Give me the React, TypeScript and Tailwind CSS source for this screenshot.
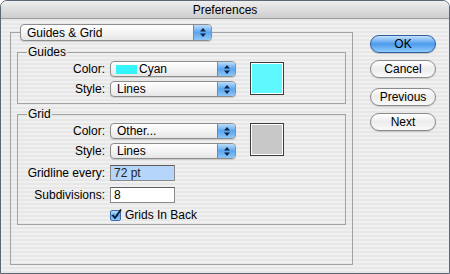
import React from "react";

const Arrows = () => (
  <svg width="8" height="11" viewBox="0 0 8 11">
    <path d="M4 1 L7 4.5 L1 4.5 Z" fill="#0d2547" />
    <path d="M4 10 L7 6.5 L1 6.5 Z" fill="#0d2547" />
  </svg>
);

const Popup = ({
  children,
  size,
}: {
  children: React.ReactNode;
  size: string;
}) => (
  <div
    className={`${size} flex items-stretch rounded-[4px] border border-[#8d8d8d] bg-gradient-to-b from-[#ffffff] via-[#f4f4f4] to-[#e6e6e6] shadow-[0_1px_1px_rgba(0,0,0,0.15)] overflow-hidden`}
  >
    <div className="flex-1 flex items-center pl-[6px] leading-none">{children}</div>
    <div className="w-[18px] flex items-center justify-center bg-gradient-to-b from-[#b9dcfb] via-[#5aa5ee] to-[#8cc6f8] border-l border-[#5b8ccb]">
      <Arrows />
    </div>
  </div>
);

const Swatch = ({ color }: { color: string }) => (
  <div className="w-[34px] h-[33px] border border-[#3c3c3c] bg-white p-[1px]">
    <div className={`w-full h-full ${color}`} />
  </div>
);

const Label = ({ children }: { children: React.ReactNode }) => (
  <div className="w-[88px] text-right pr-[1px] leading-none">{children}</div>
);

const AquaButton = ({
  label,
  primary,
}: {
  label: string;
  primary?: boolean;
}) => (
  <button
    className={
      primary
        ? "w-[66px] h-[18px] rounded-full border border-[#2d5f9e] bg-gradient-to-b from-[#c4e1fb] via-[#4b9bec] to-[#8fcbfb] text-[12px] leading-none text-black shadow-[0_1px_1px_rgba(0,0,0,0.2)]"
        : "w-[66px] h-[18px] rounded-full border border-[#8b8b8b] bg-gradient-to-b from-[#ffffff] via-[#ececec] to-[#fafafa] text-[12px] leading-none text-black shadow-[0_1px_1px_rgba(0,0,0,0.15)]"
    }
  >
    {label}
  </button>
);

export default function App() {
  return (
    <div className="w-[450px] h-[274px] font-['Liberation_Sans',Arial,sans-serif] text-[12px] text-black">
      <div className="h-full flex flex-col rounded-t-[7px] border border-[#5b6775] overflow-hidden bg-[repeating-linear-gradient(180deg,#f0f0f0_0px,#f0f0f0_2px,#e7e7e7_2px,#e7e7e7_4px)]">
        {/* title bar */}
        <div className="h-[18px] shrink-0 flex items-center justify-center border-b border-[#9c9c9c] bg-gradient-to-b from-[#eeeeee] to-[#cdcdcd] text-[12px] leading-none">
          Preferences
        </div>

        <div className="flex">
          {/* main group */}
          <fieldset className="ml-[9px] mt-[5px] w-[342px] h-[241px] border border-[#a2a2a2] px-[6px] pt-[4px]">
            <legend className="ml-[3px]">
              <Popup size="w-[192px] h-[17px]">Guides &amp; Grid</Popup>
            </legend>

            <fieldset className="w-[329px] border border-[#a2a2a2] pt-[2px] pb-[6px]">
              <legend className="ml-[9px] px-[1px] leading-[14px]">Guides</legend>
              <div className="flex items-start">
                <div className="flex flex-col gap-[4px]">
                  <div className="flex items-center gap-[4px]">
                    <Label>Color:</Label>
                    <Popup size="w-[126px] h-[16px]">
                      <span className="w-[21px] h-[9px] bg-[#33f4fb] mr-[2px] ml-[-1px]" />
                      Cyan
                    </Popup>
                  </div>
                  <div className="flex items-center gap-[4px]">
                    <Label>Style:</Label>
                    <Popup size="w-[126px] h-[16px]">Lines</Popup>
                  </div>
                </div>
                <div className="ml-[14px] mt-[1px]">
                  <Swatch color="bg-[#5ef9ff]" />
                </div>
              </div>
            </fieldset>

            <fieldset className="mt-[3px] w-[329px] border border-[#a2a2a2] pt-[2px] pb-[2px]">
              <legend className="ml-[9px] px-[1px] leading-[14px]">Grid</legend>
              <div className="flex items-start">
                <div className="flex flex-col gap-[4px]">
                  <div className="flex items-center gap-[4px]">
                    <Label>Color:</Label>
                    <Popup size="w-[126px] h-[16px]">Other...</Popup>
                  </div>
                  <div className="flex items-center gap-[4px]">
                    <Label>Style:</Label>
                    <Popup size="w-[126px] h-[16px]">Lines</Popup>
                  </div>
                </div>
                <div className="ml-[14px]">
                  <Swatch color="bg-[#c8c8c8]" />
                </div>
              </div>
              <div className="mt-[6px] flex flex-col gap-[6px]">
                <div className="flex items-center gap-[4px]">
                  <Label>Gridline every:</Label>
                  <div className="w-[65px] h-[16px] border border-[#8a8a8a] border-t-[#5f5f5f] bg-[#b6d5fa] pl-[3px] flex items-center leading-none text-[#222]">
                    72 pt
                  </div>
                </div>
                <div className="flex items-center gap-[4px]">
                  <Label>Subdivisions:</Label>
                  <div className="w-[65px] h-[16px] border border-[#8a8a8a] border-t-[#5f5f5f] bg-white pl-[3px] flex items-center leading-none">
                    8
                  </div>
                </div>
                <div className="flex items-center gap-[3px] pl-[92px] h-[14px] mt-[-1px]">
                  <svg width="12" height="12" viewBox="0 0 12 12">
                    <defs>
                      <linearGradient id="cb" x1="0" y1="0" x2="0" y2="1">
                        <stop offset="0" stopColor="#cfe6fc" />
                        <stop offset="0.5" stopColor="#5ba6ee" />
                        <stop offset="1" stopColor="#9cd0fa" />
                      </linearGradient>
                    </defs>
                    <rect x="0.5" y="1.5" width="10" height="10" rx="1.5" fill="url(#cb)" stroke="#3a6ca8" />
                    <path d="M2.5 6 L5 9 L11 0.5" fill="none" stroke="#0b1b33" strokeWidth="1.8" />
                  </svg>
                  <span className="leading-none">Grids In Back</span>
                </div>
              </div>
            </fieldset>
          </fieldset>

          {/* buttons */}
          <div className="ml-[17px] mt-[16px] flex flex-col">
            <AquaButton label="OK" primary />
            <div className="mt-[7px]">
              <AquaButton label="Cancel" />
            </div>
            <div className="mt-[10px]">
              <AquaButton label="Previous" />
            </div>
            <div className="mt-[7px]">
              <AquaButton label="Next" />
            </div>
          </div>
        </div>
      </div>
    </div>
  );
}
